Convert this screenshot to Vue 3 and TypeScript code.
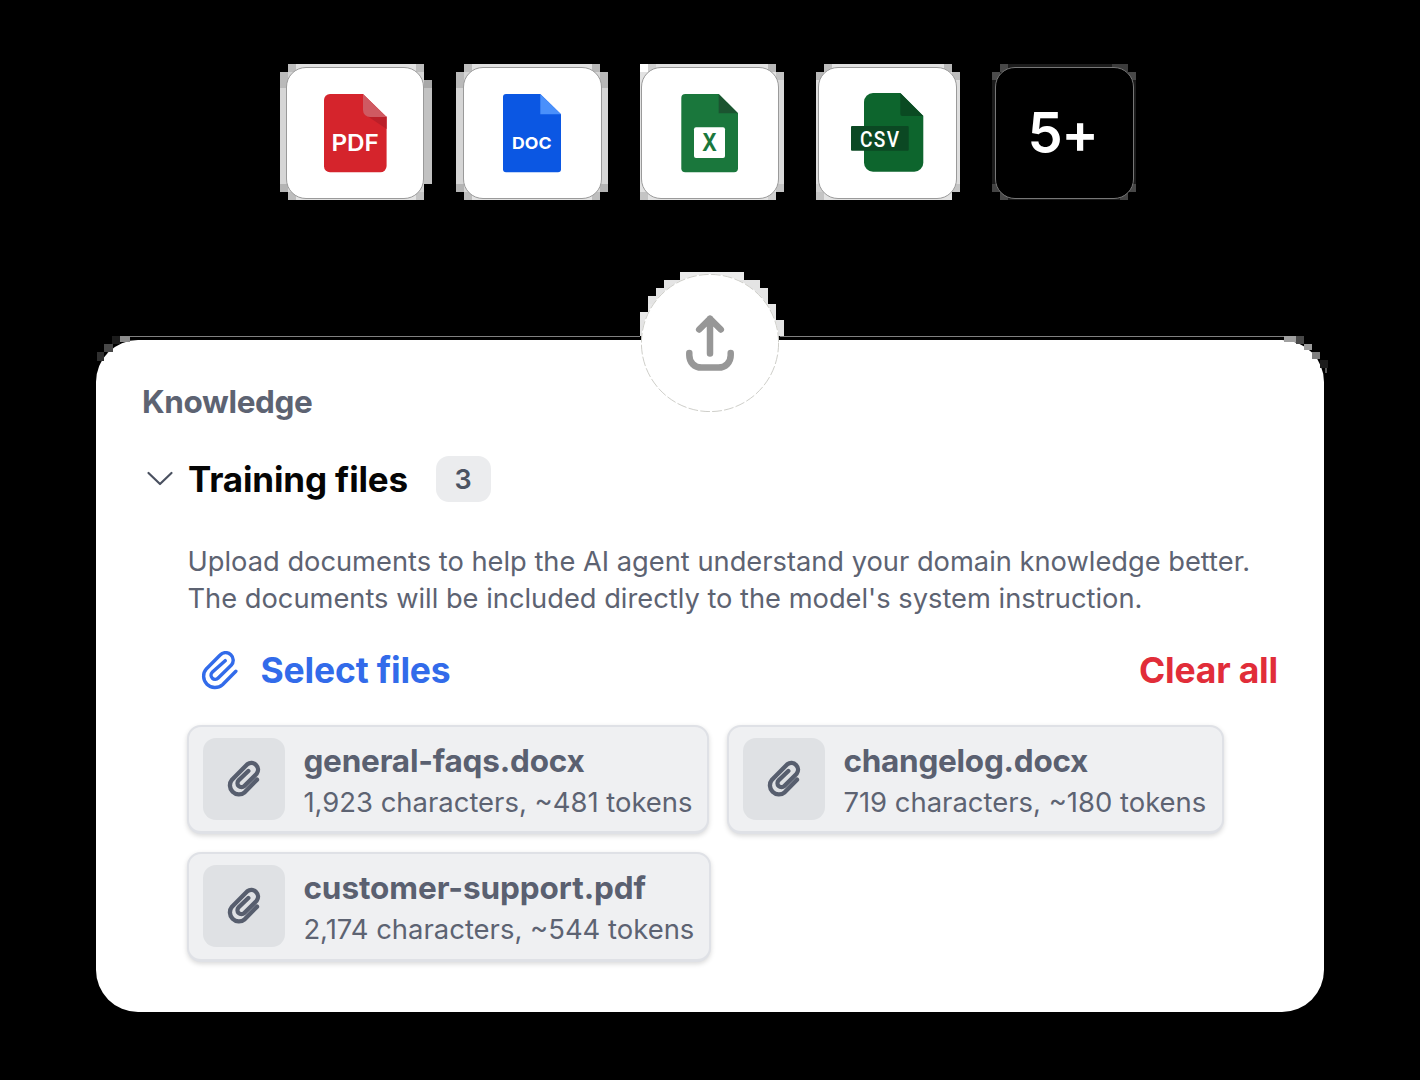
<script setup lang="ts">
interface TrainingFile { name: string; meta: string; cls: string }
type Block = [number, number, number, number, string]

const files: TrainingFile[] = [
  { name: 'general-faqs.docx', meta: '1,923 characters, ~481 tokens', cls: 'chip-a' },
  { name: 'changelog.docx', meta: '719 characters, ~180 tokens', cls: 'chip-b' },
  { name: 'customer-support.pdf', meta: '2,174 characters, ~544 tokens', cls: 'chip-c' },
]

// Stepped halo behind the tiles, the upload badge and the card corners: x, y, width, height, fill
const halo: Block[] = [
  [288, 64, 136, 136, '#e2e2e2'], [280, 72, 152, 120, '#d6d6d6'], [424, 72, 8, 8, '#000'], [424, 80, 8, 104, '#c2c2c2'], [424, 184, 8, 8, '#000'],
  [288, 64, 8, 8, '#bdbdbd'], [416, 64, 8, 8, '#bdbdbd'], [280, 72, 8, 16, '#bababa'], [280, 184, 8, 8, '#b4b4b4'], [288, 192, 8, 8, '#bdbdbd'], [416, 192, 8, 8, '#c4c4c4'], [424, 80, 8, 8, '#a8a8a8'],
  [464, 64, 136, 136, '#e2e2e2'], [456, 72, 152, 120, '#d6d6d6'],
  [464, 64, 8, 8, '#bdbdbd'], [592, 64, 8, 8, '#b8b8b8'], [456, 72, 8, 16, '#bababa'], [456, 184, 8, 8, '#b4b4b4'], [464, 192, 8, 8, '#bdbdbd'], [592, 192, 8, 8, '#bdbdbd'], [600, 72, 8, 16, '#b8b8b8'], [600, 184, 8, 8, '#b4b4b4'],
  [640, 64, 136, 136, '#e2e2e2'], [776, 72, 8, 120, '#dadada'],
  [640, 64, 8, 8, '#fff'], [648, 64, 8, 8, '#cfcfcf'], [768, 64, 8, 8, '#b8b8b8'], [776, 72, 8, 8, '#c4c4c4'], [776, 184, 8, 8, '#c4c4c4'], [640, 192, 8, 8, '#c4c4c4'], [768, 192, 8, 8, '#cfcfcf'],
  [824, 64, 128, 136, '#e2e2e2'], [816, 72, 144, 120, '#dedede'], [816, 192, 8, 8, '#c4c4c4'],
  [824, 64, 8, 8, '#bdbdbd'], [944, 64, 8, 8, '#b8b8b8'], [816, 72, 8, 8, '#b8b8b8'], [816, 184, 8, 8, '#d0d0d0'], [952, 72, 8, 8, '#bdbdbd'], [952, 184, 8, 8, '#c4c4c4'],
  [1000, 64, 128, 136, '#1c1c1c'], [992, 72, 144, 120, '#1c1c1c'],
  [1000, 64, 8, 8, '#484848'], [1112, 64, 16, 8, '#3c3c3c'], [992, 72, 8, 8, '#4c4c4c'], [1128, 72, 8, 8, '#484848'], [992, 184, 8, 8, '#444'], [1000, 192, 8, 8, '#484848'], [1120, 192, 8, 8, '#444'], [1128, 184, 8, 8, '#484848'],
  [680, 272, 64, 8, '#ebebeb'], [664, 280, 96, 8, '#e4e4e4'], [656, 288, 112, 8, '#e4e4e4'], [648, 296, 120, 8, '#e4e4e4'], [648, 304, 128, 8, '#e8e8e8'], [640, 312, 136, 8, '#e8e8e8'], [640, 320, 144, 16, '#e4e4e4'],
  [130, 336, 510, 1, '#808080'], [780, 336, 510, 1, '#808080'],
  [112, 336, 8, 8, '#1c1c1c'], [120, 336, 10, 6, '#8c8c8c'], [104, 344, 9, 8, '#484848'], [97, 352, 7, 9, '#303030'],
  [1284, 336, 12, 6, '#a0a0a0'], [1296, 336, 8, 8, '#484848'], [1304, 344, 8, 6, '#9c9c9c'], [1312, 352, 8, 7, '#808080'], [1320, 360, 8, 8, '#1c1c1c'], [1325, 368, 2, 5, '#555'],
]
</script>

<template>
  <main class="stage">
    <svg class="halo" width="1420" height="1080" viewBox="0 0 1420 1080" shape-rendering="crispEdges" aria-hidden="true">
      <rect v-for="(b, i) in halo" :key="i" :x="b[0]" :y="b[1]" :width="b[2]" :height="b[3]" :fill="b[4]" />
    </svg>

    <div class="tiles">
      <div class="tile">
        <svg width="138" height="130" viewBox="287 68 138 130">
          <path d="M330 94H363L386.6 117V166a6.3 6.3 0 0 1-6.3 6.3H330a6 6 0 0 1-6-6V100a6 6 0 0 1 6-6Z" fill="#d5242c" />
          <path d="M368 116.5H386.6V129Z" fill="#bb1f29" />
          <path d="M363 94L386.6 117H370a7 7 0 0 1-7-7Z" fill="#cf5a62" />
          <text x="331.4" y="150.8" textLength="47.5" lengthAdjust="spacingAndGlyphs" font-size="22.5" font-weight="600" fill="#fff">PDF</text>
        </svg>
      </div>
      <div class="tile">
        <svg width="138" height="130" viewBox="464 68 138 130">
          <path d="M506 94H540.3L561 114.3V169.3a3 3 0 0 1-3 3H506a3 3 0 0 1-3-3V97a3 3 0 0 1 3-3Z" fill="#0b57e3" />
          <path d="M540.3 94L561 114.3H540.3Z" fill="#4a90fb" />
          <text x="512" y="148.8" textLength="39.5" lengthAdjust="spacingAndGlyphs" font-size="16.3" font-weight="700" fill="#fff">DOC</text>
        </svg>
      </div>
      <div class="tile">
        <svg width="138" height="130" viewBox="642 68 138 130">
          <path d="M685.3 94H718.7L738 113.3V168.3a4 4 0 0 1-4 4H685.3a4 4 0 0 1-4-4V98a4 4 0 0 1 4-4Z" fill="#1a773c" />
          <path d="M718.7 94L738 113.3H718.7Z" fill="#1b5430" />
          <rect x="694" y="127.3" width="31" height="30.7" rx="2" fill="#fff" />
          <text x="702" y="151.3" textLength="15" lengthAdjust="spacingAndGlyphs" font-size="24" font-weight="700" fill="#1a773c">X</text>
        </svg>
      </div>
      <div class="tile">
        <svg width="138" height="130" viewBox="819 68 138 130">
          <path d="M873 93H900.3L923.3 116V162.7a9 9 0 0 1-9 9H873a9 9 0 0 1-9-9V102a9 9 0 0 1 9-9Z" fill="#0d652d" />
          <path d="M900.3 93L923.3 116H902.3a2 2 0 0 1-2-2Z" fill="#0a4a22" />
          <rect x="851" y="126" width="57.7" height="24.7" rx="1" fill="#0b4823" />
          <text class="csv" transform="translate(860 146.5) scale(.87 1)" font-size="22" font-weight="500" fill="#fff">CSV</text>
        </svg>
      </div>
      <div class="tile tile-more"><span>5+</span></div>
    </div>

    <div class="upload">
      <svg width="138" height="138" viewBox="641 274 138 138" fill="none" stroke-linecap="round" stroke-linejoin="round">
        <circle cx="710" cy="343" r="68.6" stroke="#c2c1bb" stroke-width=".8" stroke-dasharray="9 3" />
        <g stroke="#979797" stroke-width="6.5">
          <path d="M710 353.4V318.8M699.2 329.5L710 318.8L720.8 329.5" />
          <path d="M689.3 353V355.2C689.3 362.5 694.5 367.6 701.5 367.6H718.5C725.5 367.6 730.7 362.5 730.7 355.2V353" />
        </g>
      </svg>
    </div>

    <section class="card">
      <h2 class="heading">Knowledge</h2>
      <div class="group">
        <svg class="chevron" width="28" height="18" viewBox="0 0 28 18" fill="none" stroke="#4a5160" stroke-width="2.2" stroke-linecap="round" stroke-linejoin="round"><path d="M2.5 3L14 14L25.5 3" /></svg>
        <h3>Training files</h3>
        <span class="count">3</span>
      </div>
      <p class="desc">Upload documents to help the AI agent understand your domain knowledge better.<br>The documents will be included directly to the model's system instruction.</p>
      <div class="actions">
        <button class="select" type="button">
          <svg width="38" height="40" viewBox="18.5 17 114 120" fill="none" stroke="#326bea" stroke-width="10.3" stroke-linecap="round" stroke-linejoin="round">
            <path d="M123 78L83 118A34 34 0 0 1 35 70L76 29A22 22 0 0 1 109 60L70 98A12 12 0 0 1 52 81L91 46" />
          </svg>
          <span>Select files</span>
        </button>
        <button class="clear" type="button">Clear all</button>
      </div>
      <div class="chips">
        <article v-for="f in files" :key="f.name" class="chip" :class="f.cls">
          <div class="thumb">
            <svg width="36" height="40" viewBox="94 343 108 120" fill="none" stroke="#575e6e" stroke-width="13" stroke-linecap="round" stroke-linejoin="round">
              <path d="M187 405L150 443A27 27 0 0 1 112 405L158 359A20 20 0 0 1 186 387L149 424A12 12 0 0 1 132 407L161 379" />
            </svg>
          </div>
          <div class="info">
            <strong>{{ f.name }}</strong>
            <small>{{ f.meta }}</small>
          </div>
        </article>
      </div>
    </section>
  </main>
</template>

<style>
body { margin: 0; background: #000; }
</style>

<style scoped>
.stage { position: relative; box-sizing: border-box; width: 1420px; height: 1080px; padding-top: 67px; background: #000; font-family: Inter, "Liberation Sans", sans-serif; overflow: hidden; }
.halo { position: absolute; left: 0; top: 0; }
.tiles { position: relative; display: flex; gap: 38.8px; margin-left: 285.8px; }
.tile { box-sizing: border-box; width: 138.6px; height: 132px; border: 1px solid #9a9a9a; border-radius: 20px; background: #fff; overflow: hidden; }
.tile svg { display: block; }
.csv { font-family: Roboto, sans-serif; letter-spacing: 1.5px; }
.tile-more { display: flex; justify-content: center; padding-right: 4.500px; border-color: #777; background: #000; color: #fff; font-size: 56px; font-weight: 600; line-height: 131px; letter-spacing: -1.5px; }
.upload { position: relative; z-index: 2; width: 138px; height: 138px; margin: 75px 0 0 641px; border-radius: 50%; background: #fff; }
.upload svg { display: block; }
.card { box-sizing: border-box; width: 1228px; height: 671.5px; margin: -72px 0 0 96px; padding: 42px 46px 0; border-radius: 42px; background: #fff; color: #5d6372; }
h2, h3, p { margin: 0; white-space: nowrap; }
button { padding: 0; border: 0; background: none; font: inherit; letter-spacing: inherit; white-space: nowrap; }
.heading { height: 40px; line-height: 40px; font-size: 31.5px; font-weight: 650; letter-spacing: -.36px; }
.group { display: flex; align-items: center; height: 46px; margin-top: 34px; }
.chevron { margin-left: 4px; }
h3 { width: 247.5px; margin-left: 14px; color: #050505; font-size: 35px; font-weight: 650; line-height: 46px; letter-spacing: -.15px; }
.count { width: 55px; height: 46px; border-radius: 13px; background: #ebecee; color: #4b5362; font-size: 27px; font-weight: 600; line-height: 48px; text-align: center; }
.desc { margin: 42px 0 0 45.5px; font-size: 27.27px; line-height: 36.5px; }
.actions { display: flex; justify-content: space-between; height: 44px; margin: 32px 0 0 59px; line-height: 44px; font-size: 35.5px; font-weight: 650; letter-spacing: -.18px; }
.select { display: flex; align-items: center; gap: 21.5px; color: #326bea; }
.clear { color: #e12d39; }
.chips { display: flex; flex-wrap: wrap; gap: 18px; margin: 31.5px 0 0 45.4px; }
.chip { box-sizing: border-box; display: flex; height: 109.5px; padding: 11px 0 0 14px; border: 2px solid #dfe1e6; border-bottom-width: 3px; border-radius: 14px; background: #eff0f2; box-shadow: 0 2px 5px rgb(0 0 0 / 15%); white-space: nowrap; }
.chip-a { width: 522px; }
.chip-b { width: 497px; }
.chip-c { width: 524px; }
.thumb { display: flex; align-items: center; justify-content: center; width: 82px; height: 82px; border-radius: 13px; background: #dfe1e4; }
.info { margin-left: 18px; }
strong { display: block; height: 43px; line-height: 46px; font-size: 31.5px; font-weight: 650; color: #5a6070; letter-spacing: -.2px; }
.chip-b strong { letter-spacing: -.26px; }
.chip-c strong { letter-spacing: -.08px; }
small { display: block; height: 40px; font-size: 27.45px; line-height: 43px; }
</style>
